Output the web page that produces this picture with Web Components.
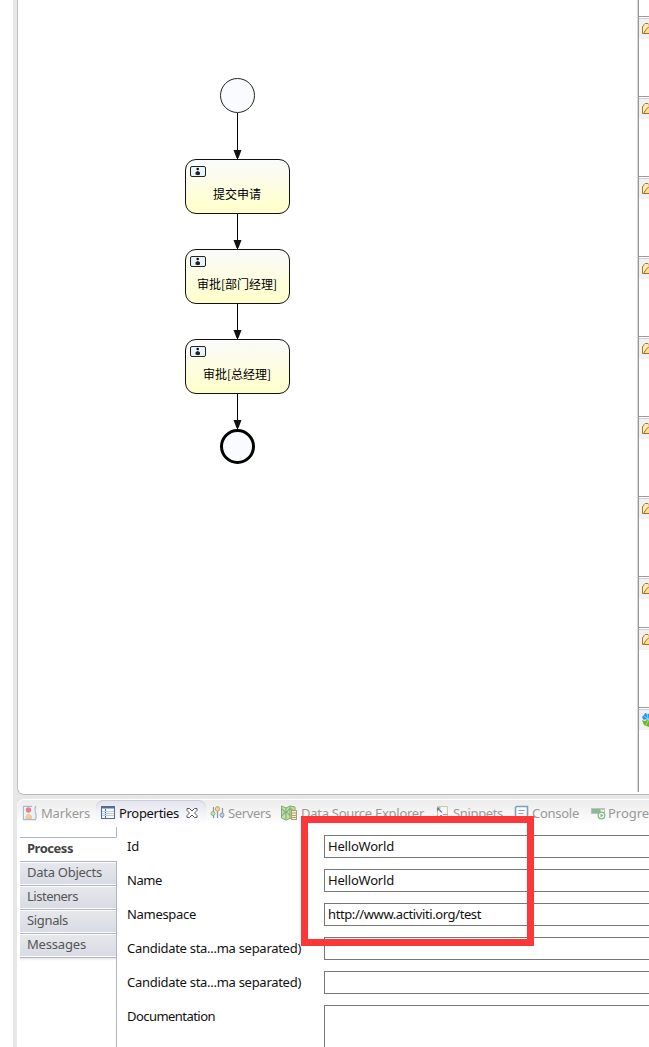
<!DOCTYPE html>
<html lang="zh">
<head>
<meta charset="utf-8">
<title>Process editor</title>
<style>
html,body{margin:0;height:100%;overflow:hidden;background:#fff}
</style>
</head>
<body>
<process-workbench></process-workbench>
<script>
const define = (name, html, setup) => customElements.define(name, class extends HTMLElement {
  constructor() {
    super();
    this.attachShadow({ mode: 'open' }).innerHTML = html;
  }
  connectedCallback() { if (setup) setup(this, this.shadowRoot); }
});

// A single line of text whose letter spacing is adjusted to fill its "w" attribute.
define('fit-text', `<style>:host{display:block;white-space:nowrap;flex:none}span{display:inline-block}</style><span></span>`, (el, root) => {
  const s = root.querySelector('span');
  s.textContent = el.getAttribute('text');
  s.style.letterSpacing = '0';
  const w = +el.getAttribute('w');
  const natural = s.getBoundingClientRect().width;
  s.style.letterSpacing = ((w - natural) / s.textContent.length) + 'px';
  el.style.width = w + 'px';
});

const ICONS = {
  markers: `<path d="M1 1.500h9M1.500 1v13.500M14 1l-1 2v4l1 2v5M1 14.500h13" fill="none" stroke="#a9bac8" stroke-width="1.300"/><path d="M2 2h10l.5 5 .5 7H2z" fill="#eef0f6"/><circle cx="6.500" cy="5" r="2.700" fill="#e88088"/><path d="M4 13.500c-.5-5.500 6-5.500 5.500 0z" fill="#f5cf90" stroke="#ddb377" stroke-width=".6"/>`,
  table: `<rect x="1.500" y="1.500" width="13" height="12" fill="#f8fbff" stroke="#556b96"/><path d="M1 1h14v2.500H1z" fill="#526b98"/><path d="M5.500 4v9" stroke="#526b98"/><path d="M2 6.500h12M2 8.500h12M2 10.500h12" stroke="#bdcbe0"/>`,
  servers: `<path d="M3.500 2v11M7.500 1v12M12.500 3v10" stroke="#87949b" stroke-width="1.200"/><circle cx="3" cy="8.500" r="2" fill="#c6e6b6" stroke="#89ae89"/><circle cx="7.500" cy="4" r="2.200" fill="#f0d58e" stroke="#c2a964"/><circle cx="12" cy="10" r="2" fill="#bfd8ef" stroke="#809dbc"/>`,
  source: `<path d="M.5 1l4.500 2 4-2 5 1v12l-4-1-5 2-4.500-2z" fill="#d0df94" stroke="#76aa79"/><path d="M5 3v11M9 1v12M1 4l4 4 4-5 4 3M1 11l4-5 4 5" fill="none" stroke="#79b58b" stroke-width="1.200"/><rect x="10.500" y="5.500" width="5" height="9" fill="#f4ecd7" stroke="#ae9e78"/><path d="M11 8h4M11 10.500h4M11 12.500h4" stroke="#b9a16d"/>`,
  snippets: `<path d="M2.500 14V1.500h10V13" fill="#f5f7fb" stroke="#d0c79b"/><path d="M2.500 6v-3h3M3 3.500l4 4" fill="none" stroke="#6c7f9e" stroke-width="1.200"/><path d="M5 10.500h2" stroke="#849bc0"/><path d="M8 9.500h5" stroke="#dc8e91"/><path d="M7 12.500h6M2 13.500v-3" stroke="#849bc0"/>`,
  console: `<path d="M2.500 1.500h11V11L12 12.500H3L1.500 11V2.500z" fill="#f7faff" stroke="#829dc2" stroke-width="1.600"/><path d="M4.500 5.500h6M4.500 8.500h5" stroke="#8d9dba" stroke-width="1.200"/>`,
  progress: `<rect x="0" y="3" width="14" height="6" fill="#b8c5b8"/><path d="M1 4h8v4H1z" fill="#8cb994"/><path d="M10 5h3v2h-3z" fill="#f2f5ef"/><circle cx="10.500" cy="10.500" r="3.300" fill="#eff8ec" stroke="#89b78c" stroke-width="1.300"/><path d="M9.500 8.500v4l3-2z" fill="#83b985"/>`
};

define('view-tab', `<style>
:host{display:flex;box-sizing:border-box;height:25px;flex:none;color:#999;font:13px/16px "Noto Sans","Open Sans",sans-serif}
.icon{width:16px;height:16px;flex:none;margin-top:5px}
fit-text{margin-top:5px}
.close{display:none;width:12px;height:12px;margin:7px 0 0 7px}
:host([selected]){color:#111;background:linear-gradient(#e2e4ed,#f2f3f8 55%,#fff);border-radius:8px 8px 0 0;box-shadow:inset 0 1px #cacbdc}
:host([selected]) .close{display:block}
</style><svg class="icon" viewBox="0 0 16 16"></svg><fit-text></fit-text>
<svg class="close" viewBox="0 0 12 12"><path d="M1 1.500h2.500L6 4l2.500-2.500H11v2L8.500 6 11 8.500v2H8.500L6 8l-2.500 2.500H1v-2L3.500 6 1 3.500z" fill="#fff" stroke="#5b5b5b"/></svg>`, (el, root) => {
  root.querySelector('.icon').innerHTML = ICONS[el.getAttribute('icon')];
  root.querySelector('.icon').style.marginRight = (el.getAttribute('gap') || 3) + 'px';
});
// Tab captions are built once the tab's attributes are known.
customElements.define('caption-tab', class extends customElements.get('view-tab') {
  connectedCallback() {
    const t = this.shadowRoot.querySelector('fit-text');
    const f = document.createElement('fit-text');
    f.setAttribute('text', this.getAttribute('text'));
    f.setAttribute('w', this.getAttribute('w'));
    t.replaceWith(f);
    super.connectedCallback();
  }
});

define('view-tabs', `<style>
:host{display:flex;height:28px;box-sizing:border-box;padding-left:5px;background:linear-gradient(#ececec,#f7f7f7 55%,#fff 92%);border-top:1px solid #fff;border-radius:8px 0 0;overflow:hidden}
</style><slot></slot>`);

define('task-node', `<style>
:host{position:absolute;left:185px;box-sizing:border-box;width:105px;height:55px;border:1px solid #111;border-radius:11px;background:linear-gradient(#fafbfc,#ffffce 90%);display:flex;flex-direction:column;align-items:center;color:#000;font:12px/18px "Noto Sans CJK SC",sans-serif}
svg{align-self:flex-start;margin:6px 0 0 4px;width:16px;height:11px;flex:none}
div{margin:8px 1px 0 0;white-space:nowrap}
</style><svg viewBox="0 0 16 11"><rect x=".5" y=".5" width="15" height="10" rx="1.500" fill="#e8f5fc" stroke="#222"/><circle cx="7.700" cy="3" r="1.300" fill="#111"/><path d="M5.500 8.500V6.500Q7.700 3.500 10 6.500v2l-2 .8z" fill="#222"/></svg><div><slot></slot></div>`);

define('flow-edge', `<style>:host{position:absolute;left:233px;width:9px}svg{display:block}</style><svg width="9"></svg>`, (el, root) => {
  const h = +el.getAttribute('length'), s = root.querySelector('svg');
  s.setAttribute('height', h);
  s.innerHTML = `<path d="M4.500 0V${h}" stroke="#000"/><path d="M.5 ${h-9}h8L5.500 ${h-1}h-2z" fill="#111"/>`;
});

define('event-node', `<style>:host{position:absolute;left:220px;box-sizing:border-box;width:35px;height:35px;border:1px solid #222;border-radius:50%;background:#fafbfe}:host([end]){border:3px solid #000}</style>`);

define('palette-drawer', `<style>
:host{display:block;box-sizing:border-box;border-top:1px solid #999;background:#fff;overflow:hidden}
.head{height:21px;background:#f1f1f1;box-shadow:inset 0 1px #cfcfcf;margin-top:1px;padding:5px 0 0 3px;box-sizing:border-box}
:host([globe]) .head{padding-top:3px}
svg{display:block;width:16px;height:15px}
</style><div class="head"><svg viewBox="0 0 16 15"></svg></div>`, (el, root) => {
  root.querySelector('svg').innerHTML = el.hasAttribute('globe')
    ? `<path d="M1 7L0 5l2-2 1-2 3 1 2-1 5 2v5H1z" fill="#2492fa"/><path d="M0 8l3 1 4-2 5 2-1 4-4 2-5-2z" fill="#67b91b"/><path d="M2 4l4 3-1-6M1 8l6-1-3 6" stroke="#c4e7ff" fill="none" stroke-width=".7"/>`
    : `<path d="M.5 10.500V3.500L2 2.500V1.500l1-1h3l1 1v1h6v8z" fill="#fff0c4" stroke="#b67025"/><path d="M3 1.500h3" stroke="#fff3df"/><path d="M1.500 10.500L4 6.500 6.500 4H15l-4 6.500z" fill="#ffdf91" stroke="#b16a20"/>`;
});

define('tool-palette', `<style>
:host{display:flex;flex-direction:column;width:11px;height:792px;border-left:1px solid #989898;box-shadow:-1px 0 #d8d8d8;box-sizing:border-box;padding-top:16px;flex:none}
.a{height:80px}.b{height:51px}.c{height:84px}
palette-drawer{flex:none}
</style>${'<palette-drawer class="a"></palette-drawer>'.repeat(7)}<palette-drawer class="b"></palette-drawer><palette-drawer class="a"></palette-drawer><palette-drawer class="c" globe></palette-drawer>`);

define('diagram-editor', `<style>
:host{display:flex;height:795px;box-sizing:border-box;background:#fff;border-bottom:1px solid #b9b9b9;border-left:1px solid #c2c2c2;border-radius:0 0 0 7px;overflow:hidden}
.canvas{position:relative;flex:1;margin-left:-18px}
</style><div class="canvas">
<event-node style="top:78px"></event-node>
<flow-edge style="top:113px" length="46"></flow-edge>
<task-node style="top:159px">提交申请</task-node>
<flow-edge style="top:214px" length="35"></flow-edge>
<task-node style="top:249px">审批[部门经理]</task-node>
<flow-edge style="top:304px" length="35"></flow-edge>
<task-node style="top:339px">审批[总经理]</task-node>
<flow-edge style="top:394px" length="35"></flow-edge>
<event-node end style="top:429px"></event-node>
</div><tool-palette></tool-palette>`);

define('section-item', `<style>
:host{display:block;box-sizing:border-box;height:24px;padding:2px 0 0 7px;border-top:1px solid #afb3c6;border-right:1px solid #afb3c6;box-shadow:inset 0 1px #fff,inset 0 -1px #fff;background:linear-gradient(#e7e8ed,#d8dbe4);color:#555;font:13px/17px "Noto Sans","Open Sans",sans-serif}
:host([selected]){background:#fff;border-right-color:transparent;font-weight:bold;color:#444;padding-top:2px}
</style><slot></slot>`);

define('section-list', `<style>
:host{display:flex;flex-direction:column;width:97px;flex:none}
.top{height:10px;border-right:1px solid #afb3c6}
.rest{flex:1;border-top:1px solid #afb3c6;border-right:1px solid #afb3c6;background:linear-gradient(#e6e6e8,#fff 3px)}
</style><div class="top"></div>
<section-item selected><fit-text text="Process" w="46"></fit-text></section-item>
<section-item><fit-text text="Data Objects" w="75"></fit-text></section-item>
<section-item><fit-text text="Listeners" w="51"></fit-text></section-item>
<section-item><fit-text text="Signals" w="41"></fit-text></section-item>
<section-item><fit-text text="Messages" w="59"></fit-text></section-item>
<div class="rest"></div>`);

define('property-row', `<style>
:host{display:flex;height:23px;margin-bottom:11px;flex:none;color:#111;font:13px/17px "Noto Sans","Open Sans",sans-serif}
.label{width:197px;flex:none;padding-top:3px}
.field{flex:1;box-sizing:border-box;border:1px solid #777;border-right:0;background:#fff;padding:2px 0 0 3px}
:host([tall]){height:60px}
</style><div class="label"><slot></slot></div><div class="field"><slot name="value"></slot></div>`);

define('property-sheet', `<style>
:host{display:flex;flex-direction:column;flex:1;padding:8px 0 0 10px;overflow:hidden;min-width:0}
</style>
<property-row><fit-text text="Id" w="12"></fit-text><fit-text slot="value" text="HelloWorld" w="66"></fit-text></property-row>
<property-row><fit-text text="Name" w="35"></fit-text><fit-text slot="value" text="HelloWorld" w="66"></fit-text></property-row>
<property-row><fit-text text="Namespace" w="69"></fit-text><fit-text slot="value" text="http://www.activiti.org/test" w="153"></fit-text></property-row>
<property-row><fit-text text="Candidate sta...ma separated)" w="174"></fit-text></property-row>
<property-row><fit-text text="Candidate sta...ma separated)" w="174"></fit-text></property-row>
<property-row tall><fit-text text="Documentation" w="88"></fit-text></property-row>`);

// Red frame laid over the identifying fields.
define('callout-frame', `<style>:host{position:absolute;left:301px;top:816px;width:233px;height:130px;box-sizing:border-box;border:7px solid #fc3737}</style>`);

define('process-workbench', `<style>
:host{display:flex;position:relative;width:649px;height:1047px;overflow:hidden;background:#fff}
.gap{width:13px;flex:none}
.frame{display:flex;flex-direction:column;flex:1;min-width:0;box-sizing:border-box;padding-left:4px;background:#e7e7e7}
.view{flex:1;display:flex;flex-direction:column;margin-top:4px;background:#fff;border-radius:8px 0 0;min-height:0}
.body{flex:1;display:flex;padding-left:3px;min-height:0}
</style><div class="gap"></div><div class="frame">
<diagram-editor></diagram-editor>
<div class="view"><view-tabs>
<caption-tab icon="markers" text="Markers" w="49" style="width:74px"></caption-tab>
<caption-tab selected icon="table" text="Properties" w="60" style="width:110px;padding-left:4px"></caption-tab>
<caption-tab icon="servers" text="Servers" w="43" gap="2" style="width:75px;padding-left:4px"></caption-tab>
<caption-tab icon="source" text="Data Source Explorer" w="123" gap="4" style="width:154px"></caption-tab>
<caption-tab icon="snippets" text="Snippets" w="50" gap="2" style="width:79px"></caption-tab>
<caption-tab icon="console" text="Console" w="47" gap="2" style="width:77px"></caption-tab>
<caption-tab icon="progress" text="Progre" w="41" gap="1" style="width:58px"></caption-tab>
</view-tabs>
<div class="body"><section-list></section-list><property-sheet></property-sheet></div></div></div>
<callout-frame></callout-frame>`);
</script>
</body>
</html>
